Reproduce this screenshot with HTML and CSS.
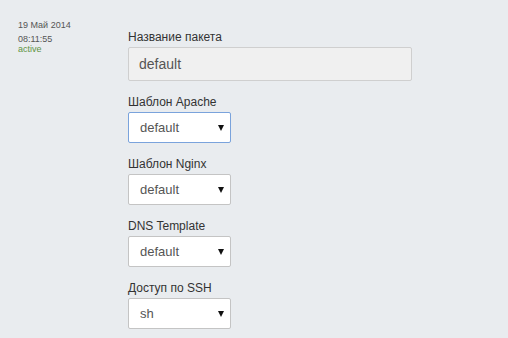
FILE: index.html
```html
<!DOCTYPE html>
<html lang="ru">
<head>
    <meta charset="UTF-8">
    <title>Пакет</title>
    <link rel="stylesheet" href="styles.css">
</head>
<body>
    <div class="page">
        <div class="meta">
            <div class="meta-date">19 Май 2014</div>
            <div class="meta-time">08:11:55</div>
            <div class="meta-status">active</div>
        </div>

        <form class="package-form">
            <label for="name">Название пакета</label>
            <input type="text" id="name" class="text-input" value="default" readonly>

            <label for="apache">Шаблон Apache</label>
            <div class="select-wrap focused">
                <select id="apache"><option>default</option></select>
            </div>

            <label for="nginx">Шаблон Nginx</label>
            <div class="select-wrap">
                <select id="nginx"><option>default</option></select>
            </div>

            <label for="dns">DNS Template</label>
            <div class="select-wrap">
                <select id="dns"><option>default</option></select>
            </div>

            <label for="ssh">Доступ по SSH</label>
            <div class="select-wrap">
                <select id="ssh"><option>sh</option></select>
            </div>
        </form>
    </div>
</body>
</html>
```
FILE: styles.css
```css
body {
    margin: 0;
    background-color: #e9ecef;
    font-family: 'Liberation Sans', Arial, sans-serif;
    color: #333;
}

.page {
    display: flex;
    align-items: flex-start;
}

.meta {
    width: 128px;
    flex-shrink: 0;
    padding: 20px 0 0 18px;
    box-sizing: border-box;
    font-size: 9px;
    line-height: 10px;
    color: #555;
}

.meta-date {
    margin-bottom: 4px;
}

.meta-status {
    color: #5f9444;
}

.package-form {
    display: flex;
    flex-direction: column;
    align-items: flex-start;
    padding-top: 30px;
}

label {
    display: block;
    font-size: 12px;
    line-height: 14px;
    margin-bottom: 3px;
    color: #333;
}

.text-input {
    width: 284px;
    height: 34px;
    box-sizing: border-box;
    margin: 0 0 14px;
    padding: 0 10px;
    border: 1px solid #cfcfcf;
    border-radius: 2px;
    background-color: #f0f0f0;
    font-family: inherit;
    font-size: 14px;
    color: #555;
    outline: none;
}

.select-wrap {
    position: relative;
    width: 103px;
    height: 31px;
    margin-bottom: 14px;
}

.select-wrap select {
    -webkit-appearance: none;
    appearance: none;
    width: 100%;
    height: 100%;
    box-sizing: border-box;
    padding: 0 0 0 11px;
    border: 1px solid #c4c4c4;
    border-radius: 2px;
    background-color: #fff;
    font-family: inherit;
    font-size: 13px;
    color: #555;
    outline: none;
}

.select-wrap.focused select {
    border-color: #7aa3dc;
}

/* small black arrow on the right of the select */
.select-wrap::after {
    content: "";
    position: absolute;
    right: 7px;
    top: 13px;
    border-left: 3.5px solid transparent;
    border-right: 3.5px solid transparent;
    border-top: 6px solid #111;
    pointer-events: none;
}
```
